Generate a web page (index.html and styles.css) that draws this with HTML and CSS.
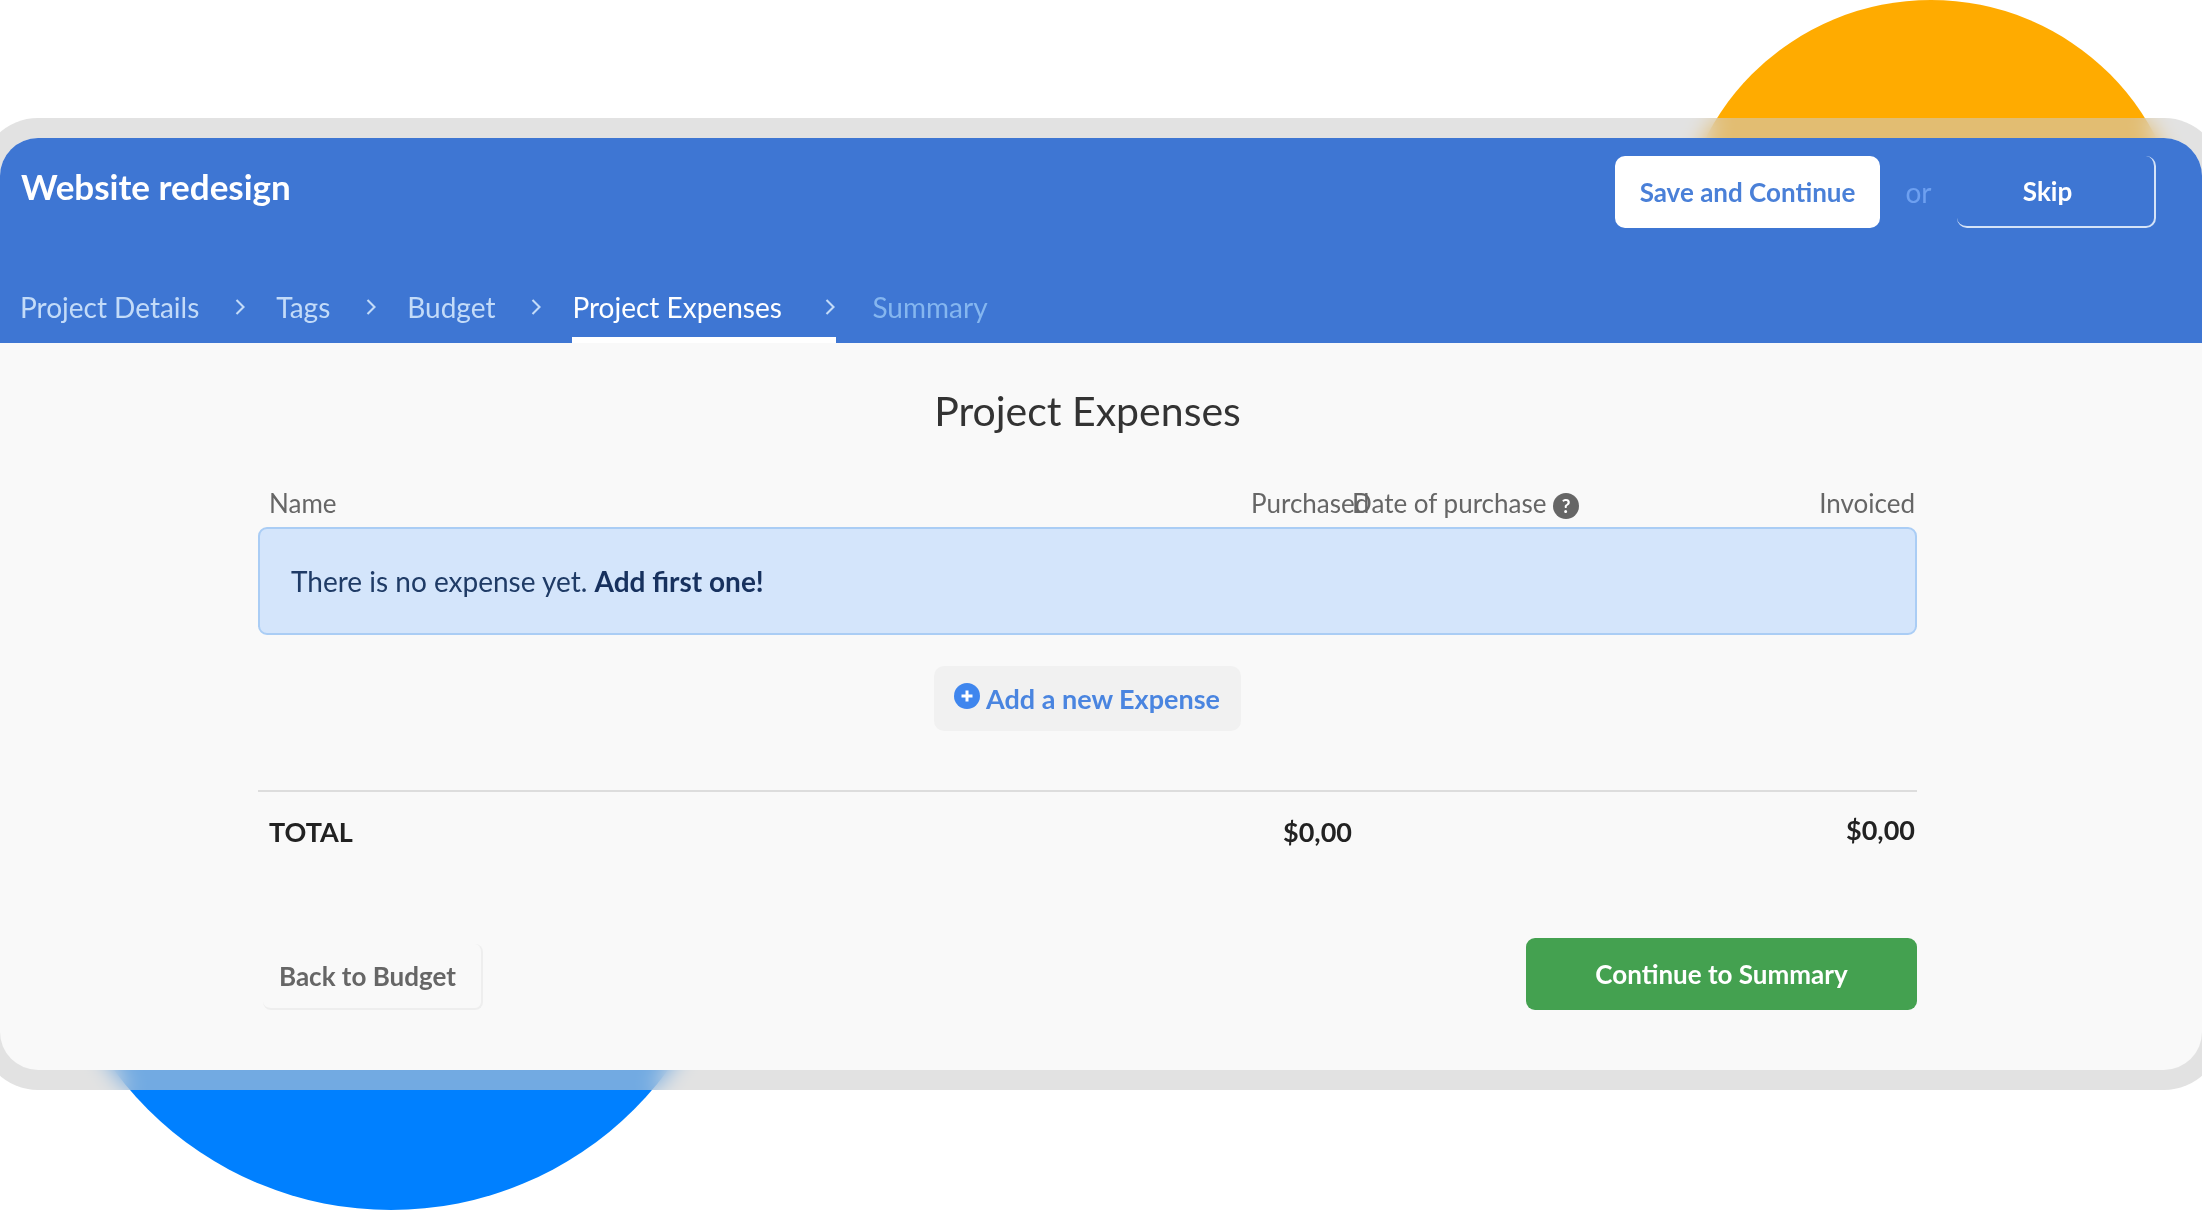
FILE: index.html
```html
<!DOCTYPE html>
<html lang="en">
<head>
<meta charset="utf-8">
<title>Project Expenses</title>
<link rel="stylesheet" href="styles.css">
</head>
<body>
<div class="stage">
  <div class="blob blob-orange"></div>
  <div class="blob blob-blue"></div>
  <div class="frame">
    <main class="card">
      <header class="head">
        <div class="head-top">
          <h1 class="title">Website redesign</h1>
          <div class="actions">
            <button class="btn btn-save">Save and Continue</button>
            <span class="or">or</span>
            <button class="btn btn-skip">Skip</button>
          </div>
        </div>
        <nav class="tabs">
          <a class="tab tab-done tab-w1">Project Details</a>
          <svg class="chev" viewBox="0 0 10 14"><path d="M2.5 2 L7.5 7 L2.5 12"/></svg>
          <a class="tab tab-done">Tags</a>
          <svg class="chev" viewBox="0 0 10 14"><path d="M2.5 2 L7.5 7 L2.5 12"/></svg>
          <a class="tab tab-done">Budget</a>
          <svg class="chev" viewBox="0 0 10 14"><path d="M2.5 2 L7.5 7 L2.5 12"/></svg>
          <a class="tab tab-active">Project Expenses<svg class="chev chev-in" viewBox="0 0 10 14"><path d="M2.5 2 L7.5 7 L2.5 12"/></svg></a>
          <a class="tab tab-next">Summary</a>
        </nav>
      </header>
      <section class="body">
        <h2 class="page-title">Project Expenses</h2>
        <div class="row row-head">
          <span>Name</span>
          <span class="num">Purchased</span>
          <span class="date">Date of purchase <i class="help">?</i></span>
          <span class="num">Invoiced</span>
        </div>
        <div class="alert">There is no expense yet. <b>Add first one!</b></div>
        <div class="add-wrap">
          <button class="btn-add">
            <svg class="plus" viewBox="0 0 26 26"><circle cx="13" cy="13" r="13"/><path d="M13 7.5v11M7.5 13h11"/></svg>
            Add a new Expense
          </button>
        </div>
        <div class="row row-total">
          <span>TOTAL</span>
          <span class="num">$0,00</span>
          <span></span>
          <span class="num num-up">$0,00</span>
        </div>
        <div class="foot">
          <button class="btn-back">Back to Budget</button>
          <button class="btn-go">Continue to Summary</button>
        </div>
      </section>
    </main>
  </div>
</div>
</body>
</html>
```
FILE: styles.css
```css
* { box-sizing: border-box; }
html, body { margin: 0; padding: 0; background: #fff; }
body { font-family: Lato, "Liberation Sans", sans-serif; overflow: hidden; }
.stage { position: relative; width: 2202px; height: 1210px; overflow: hidden; padding-top: 118px; }
.blob { position: absolute; border-radius: 50%; }
.blob-orange { width: 506px; height: 506px; left: 1678px; top: 0; background: #ffab00; }
.blob-blue { width: 688px; height: 688px; left: 47px; top: 522px; background: #0080ff; }
.frame {
  position: relative;
  margin: 0 -20px;
  width: 2242px;
  height: 972px;
  padding: 20px;
  border-radius: 58px;
  background: rgba(203, 203, 203, .56);
  backdrop-filter: blur(11px);
}
.card { height: 932px; border-radius: 38px; overflow: hidden; background: #f9f9f9; display: flex; flex-direction: column; }
.head { height: 205px; background: #3e76d3; color: #fff; padding: 0 46px 0 20px; display: flex; flex-direction: column; justify-content: space-between; }
.head-top { display: flex; justify-content: space-between; align-items: flex-start; padding-top: 18px; }
.title { margin: 9px 0 0 1px; font-size: 35px; line-height: 42px; font-weight: 700; }
.actions { display: flex; align-items: center; }
.btn { font: inherit; height: 72px; border-radius: 10px; font-size: 26px; font-weight: 700; cursor: pointer; }
.btn-save { width: 265px; background: #fff; color: #4a80d8; border: 0; }
.or { width: 77px; text-align: center; font-size: 28px; color: #6ea0f0; }
.btn-skip { width: 199px; background: transparent; color: #fff; border: 0; border-right: 2px solid #d5e3f7; border-bottom: 2px solid #d5e3f7; padding: 0 16px 0 0; }
.tabs { display: flex; align-items: stretch; height: 66px; font-size: 28px; line-height: 40px; }
.tab { display: flex; align-items: center; height: 66px; padding-bottom: 6px; }
.tab-done { color: #c3dbf8; }
.tab-active { color: #fff; width: 264px; border-bottom: 6px solid #fff; padding-bottom: 0; position: relative; }
.tab-next { color: #85b6ef; margin-left: 36px; }
.chev { width: 14px; height: 20px; margin: 0 29px 0 34px; align-self: center; position: relative; top: -3px; fill: none; stroke: #c3dbf8; stroke-width: 1.5; }
.chev-in { margin: 0; position: absolute; right: -1px; top: 20px; }
.body { flex: 1; padding: 44px 285px 0 258px; }
.page-title { margin: 0; height: 48px; line-height: 48px; text-align: center; font-size: 41px; font-weight: 400; color: #333; }
.row { display: grid; grid-template-columns: 982px 101px 1fr; padding: 0 2px 0 11px; }
.row { grid-template-columns: 982px 101px 300px 1fr; }
.row > .date { grid-column: 3; }
.row > span:nth-child(4) { grid-column: 4; }
.row-head { margin-top: 44px; height: 48px; line-height: 48px; font-size: 26px; color: #666; }
.num { text-align: right; }
.help { display: inline-block; width: 26px; height: 26px; border-radius: 50%; background: #666; color: #fff; text-align: center; font-size: 19px; line-height: 26px; font-style: normal; font-weight: 700; vertical-align: 0; }
.alert { height: 108px; line-height: 104px; padding-left: 31px; border: 2px solid #aacdf5; border-radius: 9px; background: #d4e5fb; color: #1f3b66; font-size: 28px; }
.alert b { color: #17315e; }
.add-wrap { display: flex; justify-content: center; padding-top: 31px; }
.btn-add { display: flex; align-items: center; gap: 6px; height: 65px; width: 307px; padding: 0 0 0 20px; font: inherit; font-size: 27px; font-weight: 700; color: #4a85e0; background: #f1f1f1; border: 0; border-radius: 10px; cursor: pointer; }
.plus { width: 26px; height: 26px; fill: #3f86ee; stroke: none; position: relative; top: -3px; }
.plus path { stroke: #fff; stroke-width: 3; }
.row-total { margin-top: 59px; padding-top: 19px; height: 80px; border-top: 2px solid #ddd; font-size: 27px; font-weight: 700; color: #222; line-height: 42px; }
.num-up { position: relative; top: -2px; }
.foot { display: flex; justify-content: space-between; align-items: flex-end; margin-top: 68px; padding-right: 0; }
.btn-back { width: 220px; height: 66px; margin: 0 0 0 5px; font: inherit; font-size: 26px; font-weight: 700; color: #666; background: transparent; border: 0; border-right: 2px solid #eee; border-bottom: 2px solid #eee; border-radius: 8px; text-align: left; padding: 0 0 0 16px; cursor: pointer; }
.btn-go { width: 391px; height: 72px; font: inherit; font-size: 26px; font-weight: 700; color: #fff; background: #44a150; border: 0; border-radius: 9px; cursor: pointer; }
```
